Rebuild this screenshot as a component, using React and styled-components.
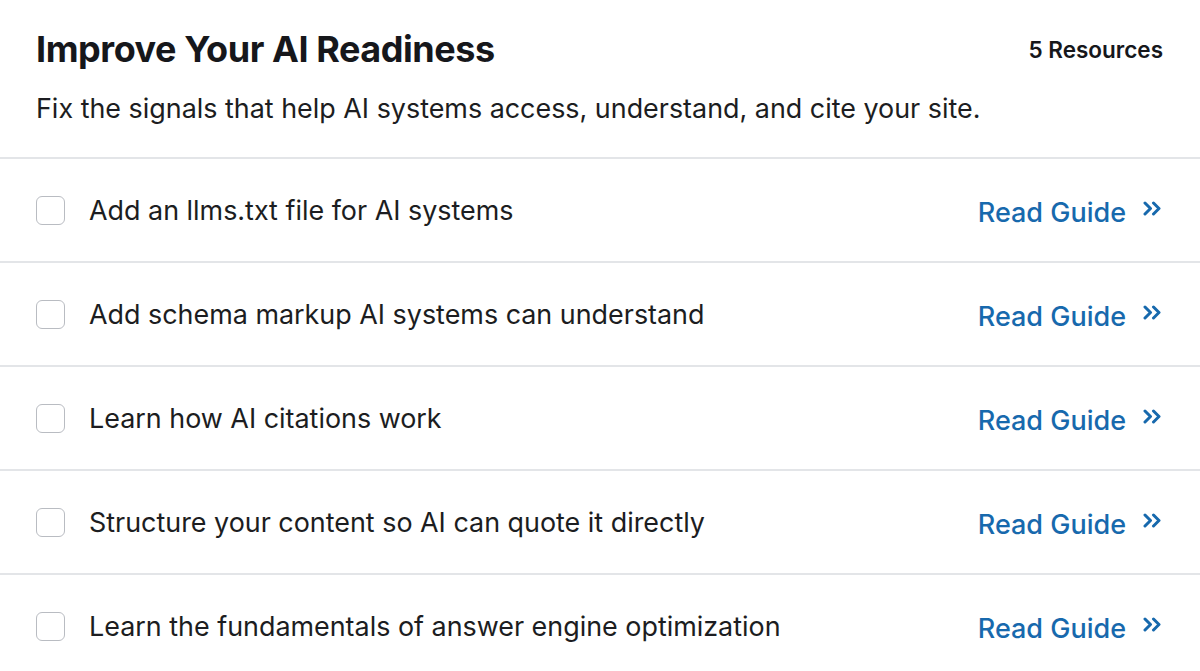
import React from "react";
import styled, { createGlobalStyle } from "styled-components";

const GlobalStyle = createGlobalStyle`
  html, body {
    margin: 0;
    padding: 0;
    background: #ffffff;
  }

  body {
    font-family: Inter, "Noto Sans", sans-serif;
    color: #16171b;
  }
`;

const Panel = styled.section`
  width: 1200px;
  background: #ffffff;
`;

const Header = styled.header`
  padding: 27px 37px 32px 36px;
  border-bottom: 2px solid #e3e5e8;
`;

const TitleRow = styled.div`
  display: flex;
  justify-content: space-between;
  align-items: center;
`;

const Title = styled.h2`
  margin: 0;
  font-size: 36px;
  font-weight: 700;
  letter-spacing: -0.45px;
  line-height: 44px;
  color: #16171b;
`;

const Count = styled.span`
  font-size: 22.5px;
  font-weight: 600;
  color: #16171b;
`;

const Subtitle = styled.p`
  margin: 20px 0 0;
  font-size: 26.9px;
  line-height: 34px;
  font-weight: 400;
  color: #1c1d21;
`;

const List = styled.ul`
  list-style: none;
  margin: 0;
  padding: 0;
`;

const Row = styled.li`
  display: flex;
  align-items: center;
  height: 102px;
  padding: 0 37px 0 36px;
  border-bottom: 2px solid #e3e5e8;
`;

const Checkbox = styled.span`
  flex: none;
  width: 27px;
  height: 27px;
  border: 1.5px solid #b9bcc2;
  border-radius: 6px;
  background: #ffffff;
`;

const Label = styled.span`
  flex: 1;
  margin-left: 24px;
  font-size: 26.9px;
  font-weight: 400;
  color: #1c1d21;
`;

const GuideLink = styled.a`
  display: flex;
  align-items: center;
  gap: 17px;
  margin-top: 4px;
  font-size: 27px;
  font-weight: 500;
  color: #1769ad;
  text-decoration: none;

  svg {
    flex: none;
    margin-bottom: 7px;
  }
`;

const Chevrons = () => (
  <svg width="20" height="15" viewBox="0 0 20 15" fill="none">
    <path
      d="M2 2l5.5 5.5L2 13M10.5 2l5.5 5.5-5.5 5.5"
      stroke="#1769ad"
      strokeWidth="3"
      strokeLinecap="round"
      strokeLinejoin="round"
    />
  </svg>
);

const resources = [
  "Add an llms.txt file for AI systems",
  "Add schema markup AI systems can understand",
  "Learn how AI citations work",
  "Structure your content so AI can quote it directly",
  "Learn the fundamentals of answer engine optimization"
];

const App = () => (
  <>
    <GlobalStyle />
    <Panel>
      <Header>
        <TitleRow>
          <Title>Improve Your AI Readiness</Title>
          <Count>{resources.length} Resources</Count>
        </TitleRow>
        <Subtitle>
          Fix the signals that help AI systems access, understand, and cite
          your site.
        </Subtitle>
      </Header>
      <List>
        {resources.map(item => (
          <Row key={item}>
            <Checkbox />
            <Label>{item}</Label>
            <GuideLink href="#">
              Read Guide
              <Chevrons />
            </GuideLink>
          </Row>
        ))}
      </List>
    </Panel>
  </>
);

export default App;
